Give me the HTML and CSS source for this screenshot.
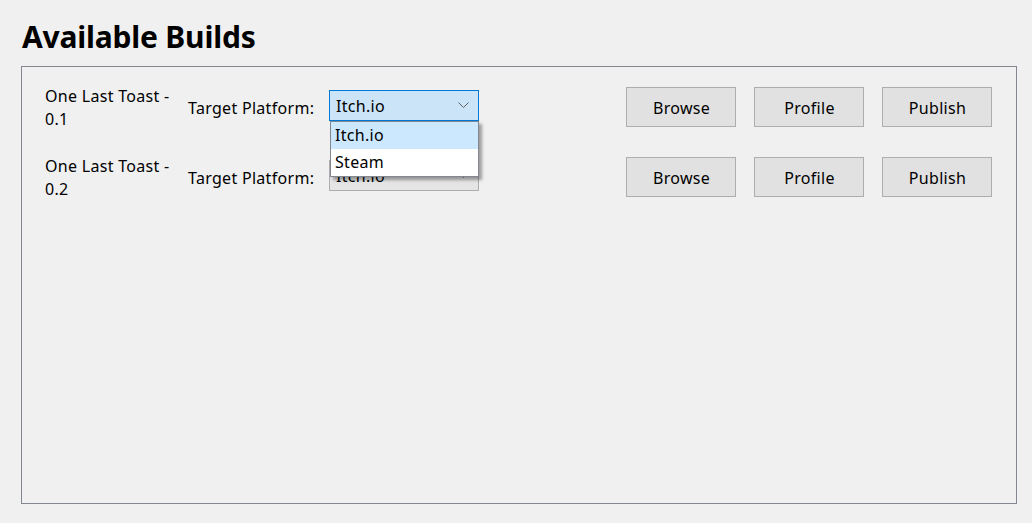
FILE: index.html
```html
<!DOCTYPE html>
<html>
<head>
<meta charset="utf-8">
<link rel="stylesheet" href="styles.css">
</head>
<body>
<h1 class="title">Available Builds</h1>
<div class="panel">
  <div class="row">
    <div class="build-name">One Last Toast - 0.1</div>
    <div class="platform-label">Target Platform:</div>
    <div class="combo-wrap">
      <div class="combo combo-open">
        <span class="combo-value">Itch.io</span>
        <svg class="chev" width="11" height="6" viewBox="0 0 11 6"><path d="M0.5 0.5 L5.5 5.5 L10.5 0.5" fill="none" stroke="#606060" stroke-width="1"/></svg>
      </div>
      <div class="dropdown">
        <div class="option selected">Itch.io</div>
        <div class="option">Steam</div>
      </div>
    </div>
    <div class="buttons">
      <button class="btn">Browse</button>
      <button class="btn">Profile</button>
      <button class="btn">Publish</button>
    </div>
  </div>
  <div class="row">
    <div class="build-name">One Last Toast - 0.2</div>
    <div class="platform-label">Target Platform:</div>
    <div class="combo-wrap">
      <div class="combo">
        <span class="combo-value">Itch.io</span>
        <svg class="chev" width="11" height="6" viewBox="0 0 11 6"><path d="M0.5 0.5 L5.5 5.5 L10.5 0.5" fill="none" stroke="#606060" stroke-width="1"/></svg>
      </div>
    </div>
    <div class="buttons">
      <button class="btn">Browse</button>
      <button class="btn">Profile</button>
      <button class="btn">Publish</button>
    </div>
  </div>
</div>
</body>
</html>
```
FILE: styles.css
```css
html, body {
  margin: 0;
  padding: 0;
}
body {
  background: #f0f0f0;
  font-family: "Noto Sans", "Open Sans", sans-serif;
  font-size: 16px;
  letter-spacing: 0.3px;
  color: #000;
  width: 1032px;
  height: 523px;
  box-sizing: border-box;
  padding: 0 15px 19px 21px;
  display: flex;
  flex-direction: column;
}
.title {
  margin: 0;
  height: 66px;
  box-sizing: border-box;
  padding: 19px 0 0 1px;
  font-size: 30px;
  font-weight: 700;
  line-height: 36px;
  letter-spacing: -0.2px;
}
.panel {
  flex: 1;
  border: 1px solid #828790;
  padding: 20px 24px 0 23px;
  display: flex;
  flex-direction: column;
  gap: 30px;
}
.row {
  display: flex;
  align-items: center;
  height: 40px;
}
.build-name {
  width: 136px;
  line-height: 23px;
  margin-top: 1px;
}
.platform-label {
  margin-left: 7px;
  width: 141px;
  margin-top: 2px;
}
.combo-wrap {
  position: relative;
  width: 150px;
  margin-top: -3px;
}
.combo {
  height: 31px;
  box-sizing: border-box;
  border: 1px solid #acacac;
  background: #e5e5e5;
  display: flex;
  align-items: center;
  justify-content: space-between;
  padding: 0 9px 0 6px;
}
.combo-open {
  border-color: #0078d7;
  background: #cce4f7;
}
.chev {
  display: block;
  margin-top: -1px;
}
.dropdown {
  position: absolute;
  left: 1px;
  top: 31px;
  width: 149px;
  box-sizing: border-box;
  background: #fff;
  border: 1px solid #828790;
  box-shadow: 3px 3px 3px rgba(0, 0, 0, 0.35);
  z-index: 5;
}
.option {
  height: 27px;
  line-height: 26px;
  padding-left: 4px;
}
.option.selected {
  background: #cce8ff;
}
.buttons {
  margin-left: auto;
  display: flex;
  gap: 18px;
}
.btn {
  width: 110px;
  height: 40px;
  background: #e1e1e1;
  border: 1px solid #adadad;
  font-family: inherit;
  font-size: 16px;
  letter-spacing: 0.3px;
  color: #000;
  padding: 2px 0 0 1px;
  margin: 0;
}
```
